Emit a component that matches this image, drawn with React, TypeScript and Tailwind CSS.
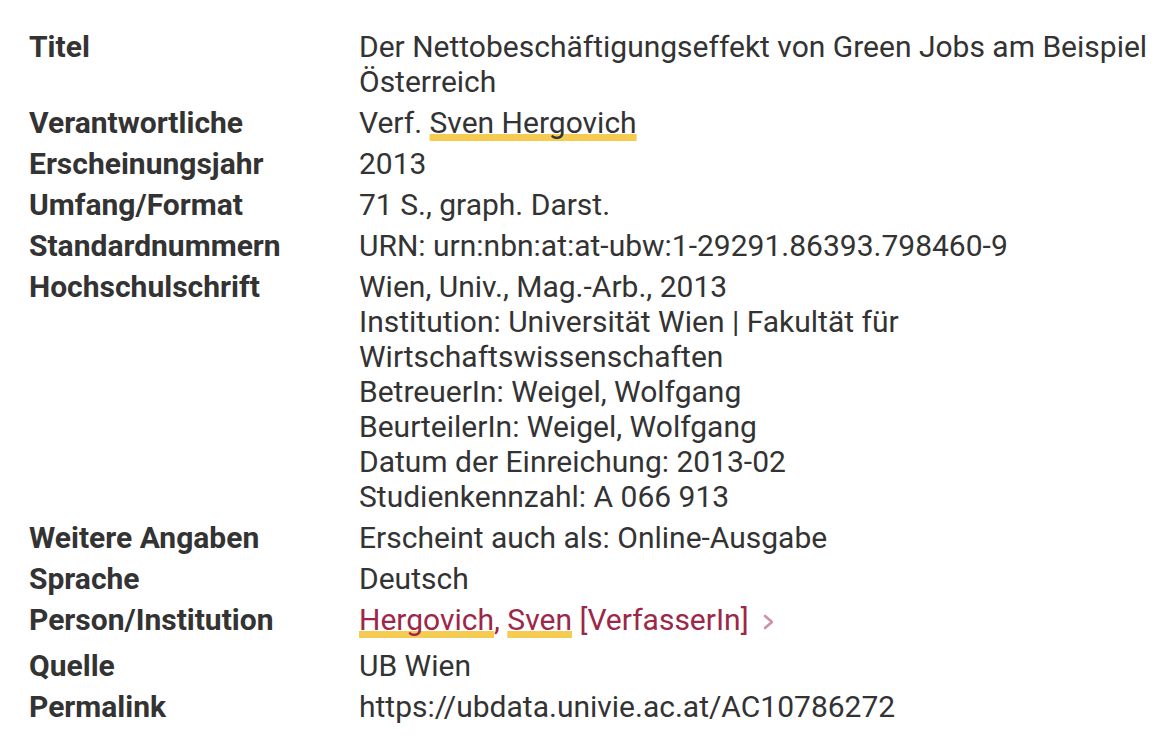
import type { ReactNode } from "react";

function Mark({ children }: { children: ReactNode }) {
  return (
    <span className="underline decoration-[#f6cb52] decoration-[7px] underline-offset-[1px] [text-decoration-skip-ink:none]">
      {children}
    </span>
  );
}

interface RowProps {
  label: string;
  children: ReactNode;
  className?: string;
}

function Row({ label, children, className = "" }: RowProps) {
  return (
    <>
      <dt className={`font-bold ${className}`}>{label}</dt>
      <dd className={className}>{children}</dd>
    </>
  );
}

export default function App() {
  return (
    <div className="min-h-screen bg-white text-[#333333] font-['Roboto',sans-serif] text-[30px] leading-[35px] pl-[29px] pt-[29px] pr-[12px]">
      <dl className="grid grid-cols-[330px_1fr] gap-y-[6px]">
        <Row label="Titel">Der Nettobeschäftigungseffekt von Green Jobs am Beispiel Österreich</Row>
        <Row label="Verantwortliche">
          Verf. <Mark>Sven Hergovich</Mark>
        </Row>
        <Row label="Erscheinungsjahr">2013</Row>
        <Row label="Umfang/Format">71 S., graph. Darst.</Row>
        <Row label="Standardnummern">URN: urn:nbn:at:at-ubw:1-29291.86393.798460-9</Row>
        <Row label="Hochschulschrift">
          <div>Wien, Univ., Mag.-Arb., 2013</div>
          <div className="max-w-[600px]">Institution: Universität Wien | Fakultät für Wirtschaftswissenschaften</div>
          <div>BetreuerIn: Weigel, Wolfgang</div>
          <div>BeurteilerIn: Weigel, Wolfgang</div>
          <div>Datum der Einreichung: 2013-02</div>
          <div>Studienkennzahl: A 066 913</div>
        </Row>
        <Row label="Weitere Angaben">Erscheint auch als: Online-Ausgabe</Row>
        <Row label="Sprache">Deutsch</Row>
        <Row label="Person/Institution" className="pb-[5px]">
          <span className="text-[#9c2748]">
            <Mark>Hergovich</Mark>, <Mark>Sven</Mark> [VerfasserIn]
          </span>
          <svg className="inline-block w-[12px] h-[16px] ml-[14px]" viewBox="0 0 12 16" fill="none">
            <path d="M2 2 L9 8 L2 14" stroke="#d291a3" strokeWidth="2.6" strokeLinecap="round" strokeLinejoin="round" />
          </svg>
        </Row>
        <Row label="Quelle">UB Wien</Row>
        <Row label="Permalink">https://ubdata.univie.ac.at/AC10786272</Row>
      </dl>
    </div>
  );
}
